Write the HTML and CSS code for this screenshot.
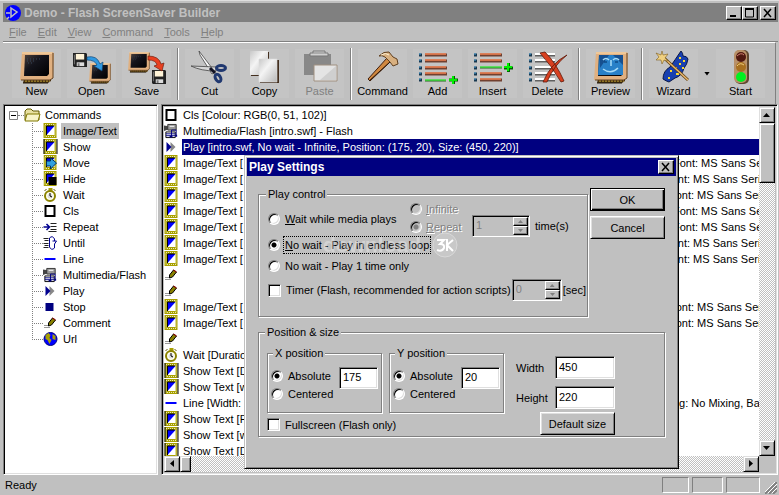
FILE: index.html
```html
<!DOCTYPE html>
<html lang="en">
<head>
<meta charset="utf-8">
<title>Demo - Flash ScreenSaver Builder</title>
<link rel="stylesheet" href="styles.css">
</head>
<body>
<svg class="defs" aria-hidden="true">
  <defs>
    <linearGradient id="glass" x1="0" y1="0" x2="1" y2="1"><stop offset="0" stop-color="#4a403c"/><stop offset=".4" stop-color="#14141c"/><stop offset="1" stop-color="#000"/></linearGradient>
    <linearGradient id="page" x1="0" y1="0" x2="1" y2="1"><stop offset="0" stop-color="#c8c8c8"/><stop offset=".4" stop-color="#f4f4f4"/><stop offset="1" stop-color="#b8b8b8"/></linearGradient>
  </defs>
  <symbol id="monitor" viewBox="0 0 34 32">
    <path d="M4 27h27v2l-3 2H3z" fill="#463010"/><path d="M5 29h25" stroke="#d8b838" stroke-dasharray="2 1"/><path d="M3 31h25" stroke="#20180c"/>
    <path d="M2 0h30l2 1-1 25-3 2H0z" fill="#e0b080"/><path d="M33 1v25l-3 2H1" fill="none" stroke="#604020"/><path d="M2 1h30" stroke="#ffe0b0"/>
    <path d="M5 3h24v19l-2 2H4z" fill="url(#glass)"/><path d="M7 9h9M7 7h14M8 11h6" stroke="#38485c" stroke-dasharray="1 2"/>
  </symbol>
  <symbol id="disk" viewBox="0 0 15 15"><path d="M0 0h14l1 1v14H1l-1-1z" fill="#222"/><path d="M3 1h9v6H3z" fill="#fff4d8"/><path d="M4 10h8v4H4z" fill="#ddd"/><path d="M5 11h2v3H5zM1 2h1v10H1z" fill="#777"/></symbol>
  <symbol id="picture" viewBox="0 0 14 16"><path d="M0 0h13v15H0z" fill="#a8a000"/><path d="M1.500 1.500h10v12h-10z" fill="none" stroke="#e8e8b0" stroke-dasharray="1 1"/><path d="M3 3h8v9H3z" fill="#fff"/><path d="M3 3h8L3 12z" fill="#00f"/><path d="M3 3v9M3 3h7" stroke="#000"/></symbol>
  <symbol id="show" viewBox="0 0 14 16"><use href="#picture" width="14" height="16"/><path d="M.5 0v15M13.500 0v15" stroke="#000"/></symbol>
  <symbol id="move" viewBox="0 0 14 16"><use href="#picture" width="14" height="16"/><path d="M3 6h4V3l6 5-6 6v-3H3z" fill="#30a0e0" stroke="#003060"/></symbol>
  <symbol id="hide" viewBox="0 0 14 16"><use href="#picture" width="14" height="16"/><path d="M5 6h8v8H5z" fill="#000"/></symbol>
  <symbol id="wait" viewBox="0 0 14 16"><path d="M5 1h4v3H5z" fill="#a8a000"/><circle cx="6.500" cy="9" r="5" fill="#fffff0" stroke="#8c8400" stroke-width="2"/><circle cx="6.500" cy="9" r="2.500" fill="#ddd"/><path d="M6.500 6v3l2 1" fill="none" stroke="#000"/><path d="M1 4l2-2M12 4l-2-2" stroke="#605800"/></symbol>
  <symbol id="cls" viewBox="0 0 14 16"><path d="M2 3h9v10H2z" fill="#fff" stroke="#000" stroke-width="2"/></symbol>
  <symbol id="repeat" viewBox="0 0 14 16"><path d="M0 8h6M3 5l3 3-3 3" fill="none" stroke="#000090" stroke-width="1.500"/><path d="M7 4.500h6M7 7.500h6M7 10.500h6M5 12.500h8" stroke="#222"/></symbol>
  <symbol id="until" viewBox="0 0 14 16"><path d="M0 3.500h5M1 5.500h4M0 8.500h5M1 10.500h4M0 12.500h5" stroke="#222"/><path d="M11 6V4Q9 0 6 3v9q2 4 5 1V9M9 6h4l-2 3" fill="none" stroke="#000090"/></symbol>
  <symbol id="line" viewBox="0 0 14 16"><path d="M1 8h11" stroke="#00f" stroke-width="2"/></symbol>
  <symbol id="media" viewBox="0 0 16 16"><path d="M0 2l5 1v3L0 8z" fill="#444"/><path d="M4 1h9v6H4z" fill="#999" stroke="#333"/><path d="M6 3h5" stroke="#fff"/><path d="M2 9h10v6H2z" fill="#fff" stroke="#000"/><path d="M2 11h10M2 13h10M8 7v7M8 7h5v6" fill="none" stroke="#000080"/><path d="M6 14h3M12 13h2" stroke="#000080" stroke-width="2"/></symbol>
  <symbol id="play" viewBox="0 0 14 16"><path d="M6 3l5 5-5 5z" fill="#888"/><path d="M2 3l5 5-5 5z" fill="#000090"/></symbol>
  <symbol id="stop" viewBox="0 0 14 16"><path d="M2 4h8v8H2z" fill="#000080"/></symbol>
  <symbol id="comment" viewBox="0 0 14 16"><path d="M1 10h1v1H1zM3 10h1v1H3zM1 12h1v1H1zM3 12h1v1H3zM5 12h1v1H5z" fill="#333"/><path d="M5 8l4-5 3 2-4 5-3 1z" fill="#888000" stroke="#000"/><path d="M9 3l3 2" stroke="#a00" stroke-width="1"/></symbol>
  <symbol id="url" viewBox="0 0 14 16"><circle cx="7" cy="8" r="6.500" fill="#00f" stroke="#000080"/><path d="M2 4l3-2 2 2-1 3 2 2-2 4-2-4-2-1zM9 3l3 2v4l-3-1z" fill="#a8a000"/></symbol>
  <symbol id="tick" viewBox="0 0 32 34"><path d="M1 5h3M1 11h3M1 18h3M1 24h3M1 30h3" stroke="#183850" stroke-width="3"/><path d="M1 4h2M1 10h2M1 17h2M1 23h2M1 29h2" stroke="#48a0d8"/></symbol>
</svg>

<main class="window">
  <header class="titlebar">
    <svg class="logo" viewBox="0 0 16 16"><circle cx="8" cy="8" r="8" fill="#00f"/><path d="M6 3l6 4-6 5zM1 8h4M4 12l-2 2" fill="none" stroke="#c0c0c0" stroke-width="1.500"/></svg>
    <h1>Demo - Flash ScreenSaver Builder</h1>
    <div class="controls">
      <button class="cap" aria-label="Minimize"><svg viewBox="0 0 12 10"><path d="M2 8h6" stroke="#000" stroke-width="2"/></svg></button>
      <button class="cap" aria-label="Maximize"><svg viewBox="0 0 12 10"><path d="M1.500 1h8v8h-8z" fill="none" stroke="#000"/><path d="M1 1h9" stroke="#000" stroke-width="2"/></svg></button>
      <button class="cap close" aria-label="Close"><svg viewBox="0 0 12 10"><path d="M2 1l7 8M9 1L2 9" stroke="#000" stroke-width="1.500"/></svg></button>
    </div>
  </header>

  <nav class="menu">
    <a href="#file"><u>F</u>ile</a><a href="#edit"><u>E</u>dit</a><a href="#view"><u>V</u>iew</a><a href="#command"><u>C</u>ommand</a><a href="#tools"><u>T</u>ools</a><a href="#help"><u>H</u>elp</a>
  </nav>

  <div class="toolbar">
    <button><svg viewBox="0 0 40 34"><use href="#monitor" x="3" y="2" width="34" height="32"/></svg>New</button>
    <button><svg viewBox="0 0 40 34"><use href="#monitor" x="17" y="13" width="22" height="21"/><use href="#disk" x="1" y="3" width="14" height="14"/><path d="M15 7q10-2 13 7l3-2-1 9-8-5 3-1q-2-5-10-5z" fill="#3098e0" stroke="#104878" stroke-width=".7"/></svg>Open</button>
    <button><svg viewBox="0 0 40 34"><use href="#monitor" x="1" y="2" width="22" height="21"/><use href="#disk" x="25" y="20" width="14" height="14"/><path d="M21 6q11 0 13 8l3-1-2 8-8-5 3-1q-1-5-9-5z" fill="#e84020" stroke="#702010" stroke-width=".7"/></svg>Save</button>
    <i class="sep"></i>
    <button><svg viewBox="0 0 40 34"><path d="M9 1l16 21-3 2L10 5z" fill="#f8f8f8" stroke="#444" stroke-width=".8"/><path d="M1 16l25 1v4q-15 0-25-5z" fill="#d8d8d8" stroke="#444" stroke-width=".8"/><ellipse cx="31" cy="18" rx="4.500" ry="2.500" fill="none" stroke="#203870" stroke-width="3"/><ellipse cx="28" cy="28" rx="2.500" ry="4" transform="rotate(-30 28 28)" fill="none" stroke="#203870" stroke-width="3"/><path d="M20 18l5 5" stroke="#112" stroke-width="3"/></svg>Cut</button>
    <button><svg viewBox="0 0 40 34"><path d="M6 2h18v24H6z" fill="#443020"/><path d="M5 1h18v24H5z" fill="url(#page)"/><path d="M15 10h19v23H15z" fill="#443020"/><path d="M14 9h18v23H14z" fill="url(#page)" stroke="#ddd" stroke-width=".6"/></svg>Copy</button>
    <button disabled><svg viewBox="0 0 40 34"><path d="M4 4h27v21H4z" fill="#888"/><path d="M10 3h3V1h12v2h3v3H10z" fill="#d0d0d0" stroke="#777"/><path d="M13 3h12" stroke="#888"/><path d="M14 15h23v16H14z" fill="#e4e4e4" stroke="#a09080"/><path d="M20 30l16-14v14z" fill="#cfcfcf"/></svg>Paste</button>
    <i class="sep"></i>
    <button><svg viewBox="0 0 40 34"><path d="M24 8L5 29l2 2L28 11z" fill="#d08840" stroke="#402010"/><path d="M6 31L27 12" stroke="#301808"/><path d="M16 6q5-5 10-4l4 5 4 2 1 5-5 2-3-4-5-5q-3-2-6-1z" fill="#d8b080" stroke="#604020"/><path d="M18 5q5-3 8 0" fill="none" stroke="#fff0d0"/></svg>Command</button>
    <button><svg viewBox="0 0 40 34"><use href="#tick" width="32" height="34"/><path d="M7 5h22M7 11h22M7 18h22M7 24h22" stroke="#704030" stroke-width="3"/><path d="M7 4h21M7 10h21M7 17h21M7 23h21" stroke="#f08050" stroke-width="1.500"/><path d="M7 31h21" stroke="#286020"/><path d="M7 30h21" stroke="#00f000"/><path d="M31 30h9M35.500 26v8" stroke="#006000" stroke-width="3"/><path d="M31 30h8M35 26v8" stroke="#00f000" stroke-width="2"/></svg>Add</button>
    <button><svg viewBox="0 0 40 34"><use href="#tick" width="32" height="34"/><path d="M7 5h22M7 11h22M7 24h22M7 30h22" stroke="#704030" stroke-width="3"/><path d="M7 4h21M7 10h21M7 23h21M7 29h21" stroke="#f08050" stroke-width="1.500"/><path d="M7 18h22" stroke="#286020"/><path d="M7 17h22" stroke="#00f000"/><path d="M31 18h9M35.500 13v9" stroke="#006000" stroke-width="3"/><path d="M31 17h8M35 13v8" stroke="#00f000" stroke-width="2"/></svg>Insert</button>
    <button><svg viewBox="0 0 40 34"><use href="#tick" width="32" height="34"/><path d="M7 5h20M7 11h20M7 18h20M7 24h20M7 30h20" stroke="#606060" stroke-width="3"/><path d="M7 4h20M7 10h20M7 17h20M7 23h20M7 29h20" stroke="#fff" stroke-width="2"/><path d="M12 3l5-1q11 11 19 29l-3 1Q23 15 12 3zM39 5Q26 15 19 32h-4Q23 13 39 5z" fill="#d84020" stroke="#601808" stroke-width=".8"/></svg>Delete</button>
    <i class="sep"></i>
    <button><svg viewBox="0 0 40 34"><use href="#monitor" x="3" y="2" width="34" height="32"/><path d="M8 5h24v20H7z" fill="#2880c8"/><path d="M8 5h10l-9 13zM22 5h10v10z" fill="#165090"/><path d="M12 10q3-3 6 0M22 10q3-3 6 0M20 10v6M12 19q8 6 15-1" fill="none" stroke="#a8dcf8" stroke-width="1.500"/><path d="M13 12h3M24 12h3" stroke="#003068"/></svg>Preview</button>
    <i class="sep"></i>
    <button><svg viewBox="0 0 40 34"><path d="M27 1q2 2 2 5 4 0 5 3-1 6-4 9-2 8-9 10l-6 4q-3-1-6-3 0-8 7-12 5-7 11-16z" fill="#1840b0" stroke="#081848"/><path d="M25 7h2v2h-2zM25 13h2v2h-2zM21 17h2v2h-2zM29 10h2v2h-2zM16 20h2v2h-2zM22 23h3v2h-3zM14 27h2v2h-2zM28 17h2v2h-2z" fill="#f8d830"/><path d="M9 7l25 23" stroke="#604010" stroke-width="3"/><path d="M9 7l25 23" stroke="#e8b870" stroke-width="1.500"/><path d="M8 1l1 4 5-1-3 4 3 3-4-1-2 4-1-4-5 0 3-3-3-4 5 2z" fill="#f0d080" stroke="#806020" stroke-width=".6"/></svg>Wizard</button>
    <button class="drop" aria-label="Wizard options"></button>
    <button><svg viewBox="0 0 40 34"><rect x="14" y="0" width="14" height="34" rx="5" fill="#604830"/><rect x="13" y="0" width="13" height="33" rx="5" fill="#b89068"/><circle cx="20" cy="7" r="5" fill="#501810"/><path d="M16 6q4-4 7-1" stroke="#d08070" fill="none"/><circle cx="20" cy="17" r="5" fill="#a87020"/><path d="M16 16q3-4 7-1" stroke="#f0d080" fill="none"/><circle cx="20" cy="27" r="5" fill="#00f020"/></svg>Start</button>
  </div>

  <div class="panes">
    <section class="pane tree" aria-label="Commands">
      <div class="root"><svg viewBox="0 0 9 9"><path d="M.5.5h8v8h-8z" fill="#fff" stroke="#808080"/><path d="M2 4.500h5" stroke="#000"/></svg><i></i><svg class="folder" viewBox="0 0 17 14"><path d="M1 3l2-2h4l2 2h6v9H1z" fill="#e8e0a0" stroke="#605800"/><path d="M3 6h13l-2 7H1z" fill="#f8f4c8" stroke="#807800"/></svg><span>Commands</span></div>
      <ul>
        <li class="current"><svg><use href="#picture"/></svg><span>Image/Text</span></li>
        <li><svg><use href="#show"/></svg><span>Show</span></li>
        <li><svg><use href="#move"/></svg><span>Move</span></li>
        <li><svg><use href="#hide"/></svg><span>Hide</span></li>
        <li><svg><use href="#wait"/></svg><span>Wait</span></li>
        <li><svg><use href="#cls"/></svg><span>Cls</span></li>
        <li><svg><use href="#repeat"/></svg><span>Repeat</span></li>
        <li><svg><use href="#until"/></svg><span>Until</span></li>
        <li><svg><use href="#line"/></svg><span>Line</span></li>
        <li><svg><use href="#media"/></svg><span>Multimedia/Flash</span></li>
        <li><svg><use href="#play"/></svg><span>Play</span></li>
        <li><svg><use href="#stop"/></svg><span>Stop</span></li>
        <li><svg><use href="#comment"/></svg><span>Comment</span></li>
        <li><svg><use href="#url"/></svg><span>Url</span></li>
      </ul>
    </section>

    <section class="pane script" aria-label="Script">
      <ul class="rows">
        <li><svg><use href="#cls"/></svg><span>Cls [Colour: RGB(0, 51, 102)]</span></li>
        <li><svg><use href="#media"/></svg><span>Multimedia/Flash [intro.swf] - Flash</span></li>
        <li class="selected"><svg><use href="#play"/></svg><span>Play [intro.swf, No wait - Infinite, Position: (175, 20), Size: (450, 220)]</span></li>
        <li><svg><use href="#picture"/></svg><span>Image/Text [</span><span class="tail far">Font: MS Sans Serif</span></li>
        <li><svg><use href="#picture"/></svg><span>Image/Text [</span><span class="tail">Font: MS Sans Serif</span></li>
        <li><svg><use href="#picture"/></svg><span>Image/Text [</span><span class="tail mid">Font: MS Sans Serif</span></li>
        <li><svg><use href="#picture"/></svg><span>Image/Text [</span><span class="tail far">Font: MS Sans Serif</span></li>
        <li><svg><use href="#picture"/></svg><span>Image/Text [</span><span class="tail far">Font: MS Sans Serif</span></li>
        <li><svg><use href="#picture"/></svg><span>Image/Text [</span><span class="tail">Font: MS Sans Serif</span></li>
        <li><svg><use href="#picture"/></svg><span>Image/Text [</span><span class="tail">Font: MS Sans Serif</span></li>
        <li><svg><use href="#comment"/></svg></li>
        <li><svg><use href="#comment"/></svg></li>
        <li><svg><use href="#picture"/></svg><span>Image/Text [</span><span class="tail mid">Font: MS Sans Serif</span></li>
        <li><svg><use href="#picture"/></svg><span>Image/Text [</span><span class="tail mid">Font: MS Sans Serif</span></li>
        <li><svg><use href="#comment"/></svg></li>
        <li><svg><use href="#wait"/></svg><span>Wait [Duration:</span></li>
        <li><svg><use href="#show"/></svg><span>Show Text [Demo</span></li>
        <li><svg><use href="#show"/></svg><span>Show Text [with</span></li>
        <li><svg><use href="#line"/></svg><span>Line [Width: 1,</span><span class="tail">xing: No Mixing, Background</span></li>
        <li><svg><use href="#show"/></svg><span>Show Text [Flash</span></li>
        <li><svg><use href="#show"/></svg><span>Show Text [with</span></li>
        <li><svg><use href="#show"/></svg><span>Show Text [Demo</span></li>
      </ul>
      <div class="scroll vertical"><button aria-label="Scroll up"><svg viewBox="0 0 8 8"><path d="M0 6h7L3.500 2z"/></svg></button><div class="thumb"></div><button aria-label="Scroll down"><svg viewBox="0 0 8 8"><path d="M0 2h7L3.500 6z"/></svg></button></div>
      <div class="scroll horizontal"><button aria-label="Scroll left"><svg viewBox="0 0 8 8"><path d="M6 0v7L2 3.500z"/></svg></button><div class="thumb"></div><button aria-label="Scroll right"><svg viewBox="0 0 8 8"><path d="M2 0v7l4-3.500z"/></svg></button></div>
    </section>
  </div>

  <footer class="status"><span>Ready</span><i></i><i class="medium"></i><i class="wide"></i><svg viewBox="0 0 12 12"><path d="M0 12L12 0M4 12l8-8M8 12l4-4" stroke="#808080" stroke-width="2"/><path d="M-1 11L11-1M3 11l9-9M7 11l5-5" stroke="#fff"/></svg></footer>

  <section class="dialog" role="dialog" aria-labelledby="dialog-title">
    <header><h2 id="dialog-title">Play Settings</h2><button class="cap" aria-label="Close dialog"><svg viewBox="0 0 12 10"><path d="M2 1l7 8M9 1L2 9" stroke="#000" stroke-width="1.500"/></svg></button></header>
    <form>
      <div class="upper">
        <fieldset class="control">
          <legend>Play control</legend>
          <div class="media-row">
            <label class="choice main"><input type="radio" name="mode"><span><u>W</u>ait while media plays</span></label>
            <div class="sub">
              <label class="choice"><input type="radio" name="times" disabled><span><u>I</u>nfinite</span></label>
              <label class="choice"><input type="radio" name="times" checked disabled><span><u>R</u>epeat</span></label>
            </div>
            <div class="spin"><input type="text" value="1" aria-label="Repeat count" disabled><span><button type="button" disabled aria-label="More repeats"></button><button class="down" type="button" disabled aria-label="Fewer repeats"></button></span></div>
            <span class="unit">time(s)</span>
          </div>
          <label class="choice loop"><input type="radio" name="mode" checked><span class="focus"><u>N</u>o wait - Play in endless loop</span></label>
          <label class="choice once"><input type="radio" name="mode"><span>No wait - Play 1 time only</span></label>
          <div class="timer">
            <label class="choice"><input type="checkbox"><span>Timer (Flash, recommended for action scripts)</span></label>
            <div class="spin short"><input type="text" value="0" aria-label="Timer seconds" disabled><span><button type="button" disabled aria-label="More seconds"></button><button class="down" type="button" disabled aria-label="Fewer seconds"></button></span></div>
            <span class="sec">[sec]</span>
          </div>
          <div class="stamp" aria-hidden="true"><span>download</span><svg viewBox="0 0 26 26"><circle cx="13" cy="13" r="12" fill="#ccc" fill-opacity=".7" stroke="#d8d8d8"/><path d="M5 8h7l-4 4q5 0 4 4-2 4-7 2M15 7v12M21 8l-6 5 6 6" fill="none" stroke="#fff" stroke-width="2"/></svg></div>
        </fieldset>
        <div class="actions"><button class="push default" type="button">OK</button><button class="push" type="button">Cancel</button></div>
      </div>
      <fieldset class="position">
        <legend>Position &amp; size</legend>
        <div class="axes">
          <div class="pair">
            <fieldset><legend>X position</legend>
              <div class="axis"><div><label class="choice"><input type="radio" name="x" checked><span>Absolute</span></label><label class="choice"><input type="radio" name="x"><span>Centered</span></label></div><input class="field" type="text" value="175" aria-label="X value"></div>
            </fieldset>
            <fieldset><legend>Y position</legend>
              <div class="axis"><div><label class="choice"><input type="radio" name="y" checked><span>Absolute</span></label><label class="choice"><input type="radio" name="y"><span>Centered</span></label></div><input class="field" type="text" value="20" aria-label="Y value"></div>
            </fieldset>
          </div>
          <label class="choice full"><input type="checkbox"><span>Fullscreen (Flash only)</span></label>
        </div>
        <div class="size">
          <label for="w">Width</label><input class="field" id="w" type="text" value="450">
          <label for="h">Height</label><input class="field" id="h" type="text" value="220">
          <button class="push" type="button">Default size</button>
        </div>
      </fieldset>
    </form>
  </section>
</main>
</body>
</html>
```
FILE: styles.css
```css
* { box-sizing: border-box; }
html, body { height: 100%; margin: 0; }
body { background: #c0c0c0; color: #000; font: 11px/14px "Liberation Sans", Arial, sans-serif; overflow: hidden; }
button, input { font: inherit; color: inherit; margin: 0; padding: 0; border-radius: 0; }
ul { list-style: none; margin: 0; padding: 0; }
h1, h2 { margin: 0; font-size: 12px; line-height: 16px; font-weight: bold; white-space: nowrap; }
.defs { position: absolute; width: 0; height: 0; }
svg { display: block; flex: none; }

.window { position: relative; display: flex; flex-direction: column; min-height: 100%; padding: 2px 1px 0 3px; border-top: 1px solid #dfdfdf; }
.titlebar { display: flex; align-items: center; height: 19px; padding: 0 2px; background: #808080; color: #c0c0c0; }
.logo { width: 16px; height: 16px; margin-right: 3px; }
.controls { display: flex; margin-left: auto; }
.cap { display: flex; align-items: center; justify-content: center; width: 16px; height: 14px; background: #c0c0c0; border: 1px solid; border-color: #fff #000 #000 #fff; box-shadow: inset -1px -1px #808080; }
.cap svg { width: 12px; height: 10px; }
.close { margin-left: 2px; }

.menu { display: flex; gap: 11px; height: 20px; padding: 3px 6px 0; border-bottom: 1px solid #808080; }
.menu a { color: #808080; text-decoration: none; }
.toolbar { display: flex; align-items: center; gap: 6px; height: 62px; margin-right: 2px; padding: 0 9px; border-top: 1px solid #fff; border-right: 1px solid #808080; }
.toolbar button { display: flex; flex-direction: column; align-items: center; flex: none; width: 49px; height: 49px; padding: 1px 0; border: 0; background: #c4c4c4; line-height: 14px; }
.toolbar button svg { width: 40px; height: 34px; }
.toolbar button:disabled { color: #808080; }
.toolbar .sep { flex: none; width: 2px; height: 52px; background: #fff; border-left: 1px solid #808080; }
.toolbar .drop { width: 6px; height: 4px; padding: 0; background: #000; clip-path: polygon(0 0, 100% 0, 50% 100%); }

.panes { display: grid; grid-template-columns: 155px minmax(0, 1fr); gap: 3px; flex: 1; min-height: 0; }
.pane { background: #fff; border: 1px solid; border-color: #808080 #fff #fff #808080; box-shadow: inset 1px 1px #000, inset -1px -1px #dfdfdf; padding: 2px; overflow: hidden; }
.root { display: flex; align-items: center; height: 16px; padding-left: 3px; }
.root svg { width: 9px; height: 9px; }
.root i { width: 6px; border-top: 1px dotted #808080; }
.root .folder { width: 17px; height: 14px; margin-right: 4px; }
.tree ul { margin-left: 26px; background: linear-gradient(#808080 50%, transparent 50%) 0 0 / 1px 2px repeat-y; }
.tree li { display: flex; align-items: center; height: 16px; }
.tree li:last-child { background: linear-gradient(#fff, #fff) 0 9px / 1px 8px no-repeat; }
.tree li::before { content: ""; width: 11px; border-top: 1px dotted #808080; }
.tree li svg, .rows svg { width: 15px; height: 16px; margin-right: 3px; }
.tree li span { padding: 1px 2px; }
.tree .current span { background: #c0c0c0; }

.script { display: grid; grid-template-columns: minmax(0, 1fr) 16px; grid-template-rows: minmax(0, 1fr) 16px; background: #c0c0c0; }
.rows { height: 0; min-height: 100%; background: #fff; overflow: hidden; }
.rows li { position: relative; display: flex; height: 16px; white-space: nowrap; }
.rows span { flex: 1; padding: 1px 0 0 1px; line-height: 15px; }
.rows .selected span { background: #000080; color: #fff; }
.rows .tail { position: absolute; left: 500px; }
.rows .mid { left: 504px; }
.rows .far { left: 508px; }
.scroll { display: flex; background: repeating-conic-gradient(#c0c0c0 0 25%, #fff 0 50%) 0 0 / 2px 2px; }
.scroll button, .thumb { flex: none; width: 16px; height: 16px; background: #c0c0c0; border: 1px solid; border-color: #dfdfdf #000 #000 #dfdfdf; box-shadow: inset 1px 1px #fff, inset -1px -1px #808080; }
.scroll button { display: flex; align-items: center; justify-content: center; }
.scroll svg { width: 8px; height: 8px; }
.scroll button:last-child { margin-top: auto; }
.vertical { flex-direction: column; }
.vertical .thumb { height: 60px; }
.horizontal .thumb { width: 11px; }
.horizontal button:last-child { margin: 0 0 0 auto; }

.status { display: flex; align-items: center; gap: 3px; height: 20px; padding: 0 0 1px 2px; }
.status span { margin-right: auto; }
.status i { width: 27px; height: 16px; border: 1px solid; border-color: #808080 #fff #fff #808080; }
.status .medium { width: 31px; }
.status .wide { width: 34px; }
.status svg { align-self: flex-end; width: 12px; height: 12px; margin: 0 1px 0 2px; }

.dialog { position: absolute; left: 244px; top: 154px; width: 435px; padding: 2px; background: #c0c0c0; border: 1px solid; border-color: #c0c0c0 #000 #000 #c0c0c0; box-shadow: inset 1px 1px #fff, inset -1px -1px #808080; }
.dialog header { display: flex; align-items: center; justify-content: space-between; height: 18px; padding: 0 2px; background: #000080; color: #fff; }
.dialog form { padding: 12px 11px 29px; }
.dialog fieldset { min-width: 0; margin: 0; border: 1px solid #808080; box-shadow: 1px 1px #fff, inset 1px 1px #fff; }
.dialog legend { height: 12px; padding: 0 2px; line-height: 12px; background: #c0c0c0; }
.upper { display: flex; gap: 2px; }
.dialog .control { position: relative; flex: 1; height: 129px; padding: 0 0 0 9px; }
.control > legend, .position > legend { margin-left: -2px; }
.pair legend { margin-left: 2px; }
.actions { display: grid; gap: 5px; align-content: start; width: 75px; }
.push { height: 23px; background: #c0c0c0; border: 1px solid; border-color: #fff #000 #000 #fff; box-shadow: inset 1px 1px #dfdfdf, inset -1px -1px #808080; }
.default { border-color: #000; box-shadow: inset 1px 1px #fff, inset -1px -1px #000, inset -2px -2px #808080; }
.choice { display: flex; align-items: center; gap: 5px; height: 18px; white-space: nowrap; }
.choice input { flex: none; appearance: none; width: 12px; height: 12px; background: #fff; border: 1px solid; border-color: #808080 #fff #fff #808080; box-shadow: inset 1px 1px #000, inset -1px -1px #dfdfdf; }
.choice [type="radio"] { border-radius: 50%; }
.choice [type="checkbox"] { width: 13px; height: 13px; }
.choice [type="radio"]:checked { background: radial-gradient(circle, #000 2px, #fff 3px); }
.choice [type="radio"]:disabled { background: #c0c0c0; }
.choice [type="radio"]:disabled:checked { background: radial-gradient(circle, #808080 2px, #c0c0c0 3px); }
.choice :disabled + span { color: #808080; text-shadow: 1px 1px #fff; }
.media-row { display: flex; align-items: flex-end; height: 37px; }
.media-row .main { align-self: center; width: 142px; }
.sub { align-self: flex-start; width: 62px; }
.sub .choice { gap: 4px; }
.spin { display: flex; flex: none; width: 58px; height: 22px; border: 1px solid; border-color: #808080 #fff #fff #808080; box-shadow: inset 1px 1px #000; padding: 1px; }
.spin input { flex: 1; min-width: 0; padding: 0 2px 3px; background: none; border: 0; color: #808080; }
.spin span { display: grid; grid-template-rows: 1fr 1fr; width: 15px; }
.spin button { display: grid; place-items: center; min-height: 0; background: #c0c0c0; border: 1px solid; border-color: #fff #000 #000 #fff; box-shadow: inset -1px -1px #808080; }
.spin button::before { content: ""; width: 5px; height: 3px; background: #808080; clip-path: polygon(50% 0, 100% 100%, 0 100%); }
.spin .down::before { transform: rotate(180deg); }
.dialog .short { width: 50px; }
.unit { padding: 0 0 4px 5px; }
.loop { height: 16px; gap: 4px; }
.focus { outline: 1px dotted #000; padding: 1px; }
.once { height: 16px; margin-top: 5px; }
.timer { display: flex; align-items: center; justify-content: space-between; height: 22px; margin: 5px 1px 0 0; }
.timer .choice { gap: 5px; }
.stamp { position: absolute; left: 64px; top: 32px; display: flex; align-items: center; gap: 6px; pointer-events: none; }
.stamp span { width: 103px; color: #fff; opacity: .3; font: bold 21px/24px "Liberation Sans", Arial, sans-serif; }
.stamp svg { width: 26px; height: 26px; }
.dialog .position { display: flex; gap: 12px; margin-top: 9px; padding: 0 49px 0 8px; }
.axes { padding: 9px 0 5px; }
.pair { display: grid; grid-template-columns: 115px 115px; gap: 7px; }
.pair fieldset { height: 66px; padding: 8px 3px 0; }
.axis { display: flex; justify-content: space-between; }
.field { width: 39px; height: 22px; padding: 0 3px 2px; background: #fff; border: 1px solid; border-color: #808080 #fff #fff #808080; box-shadow: inset 1px 1px #000, inset -1px -1px #dfdfdf; }
.full { height: 13px; margin-top: 5px; }
.size { display: grid; grid-template-columns: 39px 60px; row-gap: 7px; align-content: start; align-items: center; margin-left: auto; padding-top: 18px; }
.size .field { width: 60px; height: 23px; }
.size .push { grid-column: 1 / 3; justify-self: end; width: 75px; margin-top: -4px; }
```
